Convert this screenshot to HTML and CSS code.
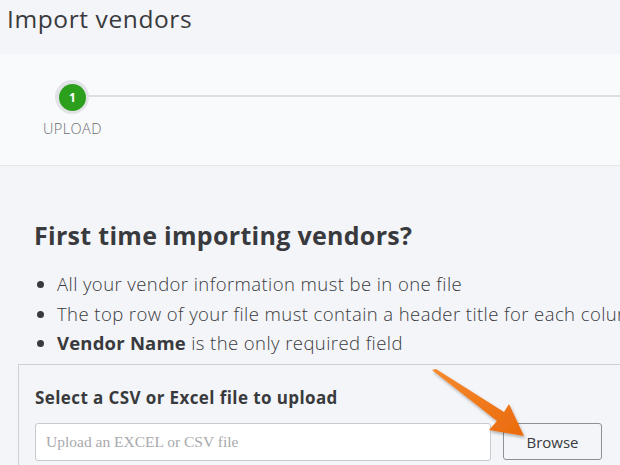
FILE: index.html
```html
<!DOCTYPE html>
<html>
<head>
<meta charset="utf-8">
<link rel="stylesheet" href="styles.css">
</head>
<body>
<div class="page">
  <header class="top">
    <h1 class="title">Import vendors</h1>
  </header>
  <section class="stepper">
    <div class="step">
      <div class="step-dot"><span>1</span></div>
      <div class="step-label">UPLOAD</div>
    </div>
    <div class="step-line"></div>
  </section>
  <main class="main">
    <h2 class="heading">First time importing vendors?</h2>
    <ul class="rules">
      <li>All your vendor information must be in one file</li>
      <li>The top row of your file must contain a header title for each column</li>
      <li><b>Vendor Name</b> is the only required field</li>
    </ul>
    <div class="card">
      <div class="card-title">Select a CSV or Excel file to upload</div>
      <div class="upload-row">
        <input class="file-input" type="text" placeholder="Upload an EXCEL or CSV file">
        <button class="browse">Browse</button>
      </div>
    </div>
  </main>
  <svg class="arrow" width="620" height="465" viewBox="0 0 620 465">
    <defs>
      <linearGradient id="ag" x1="0" y1="0" x2="1" y2="1">
        <stop offset="0" stop-color="#f58a2e"/>
        <stop offset="1" stop-color="#ea6a0c"/>
      </linearGradient>
      <filter id="sh" x="-20%" y="-20%" width="140%" height="140%">
        <feDropShadow dx="1" dy="2" stdDeviation="1.5" flood-color="#000" flood-opacity="0.3"/>
      </filter>
    </defs>
    <polygon points="432,370 436,369 504,412 509,404 524,436 489,430 497,421" fill="url(#ag)" filter="url(#sh)"/>
  </svg>
</div>
</body>
</html>
```
FILE: styles.css
```css
* { box-sizing: border-box; }
html, body { margin: 0; padding: 0; }
body {
  width: 620px;
  height: 465px;
  overflow: hidden;
  background: #f4f5f8;
  font-family: "Open Sans", "Noto Sans", sans-serif;
  color: #393a3d;
}
.page { position: relative; width: 620px; height: 465px; overflow: hidden; }
.top {
  height: 54px;
  padding: 2px 0 0 7px;
  background: #f4f5f8;
}
.title {
  margin: 0;
  font-size: 24.5px;
  font-weight: 400;
  line-height: 34px;
  letter-spacing: 0.6px;
  color: #393a3d;
}
.stepper {
  height: 112px;
  background: #f9fafb;
  border-bottom: 1px solid #e4e6ea;
  display: flex;
  align-items: flex-start;
}
.step {
  display: flex;
  flex-direction: column;
  align-items: center;
  padding-top: 26px;
  margin-left: 43px;
}
.step-dot {
  width: 34px;
  height: 34px;
  border-radius: 50%;
  background: #e1e3e6;
  display: flex;
  align-items: center;
  justify-content: center;
  position: relative;
  z-index: 1;
}
.step-dot span {
  width: 27px;
  height: 27px;
  border-radius: 50%;
  background: #2ca01c;
  color: #fff;
  font-size: 12px;
  font-weight: 700;
  display: flex;
  align-items: center;
  justify-content: center;
}
.step-label {
  margin-top: 5px;
  font-size: 14.5px;
  letter-spacing: 0.4px;
  color: #6b6c72;
  font-weight: 300;
}
.step-line {
  flex: 1;
  height: 2px;
  background: #dcdee2;
  margin-top: 41px;
  margin-left: -30px;
}
.main {
  padding: 52px 0 0 0;
}
.heading {
  margin: 0 0 0 34px;
  font-size: 25px;
  font-weight: 700;
  line-height: 34px;
  letter-spacing: 0.3px;
  color: #393a3d;
  white-space: nowrap;
}
.rules {
  margin: 17px 0 0 0;
  padding: 0 0 0 57px;
  font-size: 18.5px;
  font-weight: 300;
  line-height: 29.5px;
  letter-spacing: 0.42px;
  white-space: nowrap;
  color: #393a3d;
}
.rules b { font-weight: 700; letter-spacing: 0.2px; }
.card {
  margin: 6px 0 0 18px;
  border-top: 1px solid #cdd0d5;
  border-left: 1px solid #cdd0d5;
  padding: 20px 0 0 16px;
  height: 120px;
}
.card-title {
  font-size: 17px;
  font-weight: 700;
  line-height: 26px;
  letter-spacing: 0.4px;
}
.upload-row {
  margin-top: 12px;
  display: flex;
  align-items: center;
  gap: 12px;
}
.file-input {
  width: 456px;
  height: 38px;
  border: 1px solid #c8cbd0;
  border-radius: 3px;
  background: #fff;
  padding: 0 10px;
  font-family: "Liberation Serif", serif;
  font-size: 15.5px;
  color: #393a3d;
}
.file-input::placeholder { color: #a8a9ad; }
.browse {
  width: 99px;
  height: 37px;
  border: 1px solid #8d9096;
  border-radius: 3px;
  background: #f4f5f8;
  font-family: "Open Sans", "Noto Sans", sans-serif;
  font-size: 15px;
  color: #393a3d;
  padding: 0;
}
.arrow { position: absolute; left: 0; top: 0; pointer-events: none; }
```
